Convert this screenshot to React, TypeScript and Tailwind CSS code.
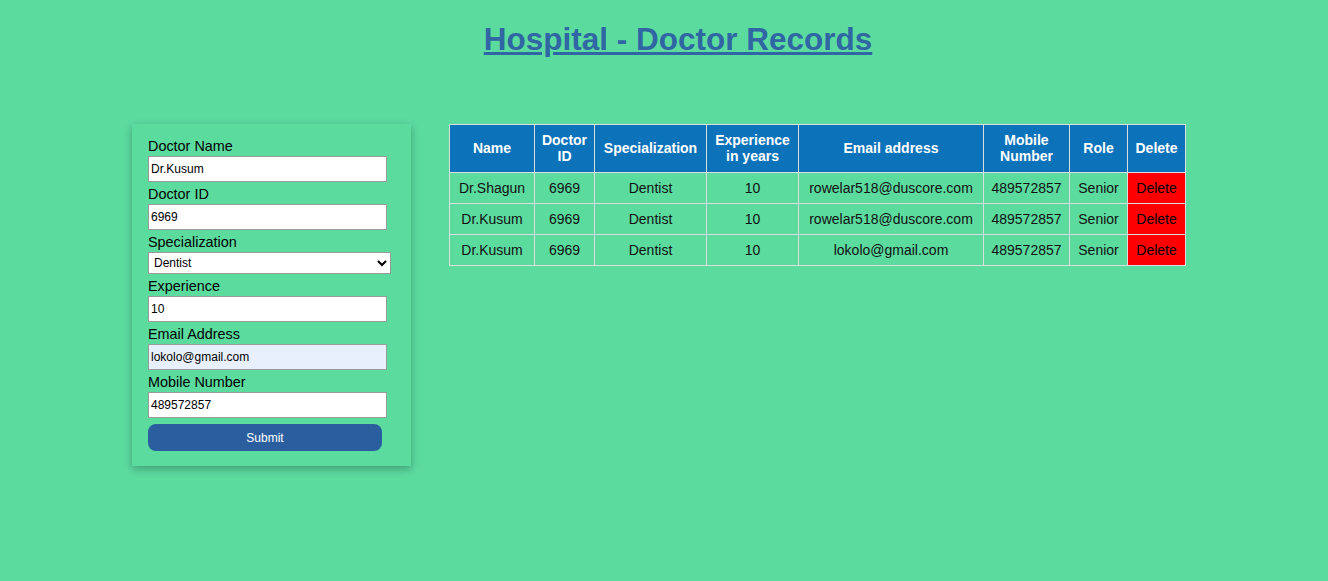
import React, { useState } from 'react';

type Doctor = {
  name: string;
  id: string;
  spec: string;
  exp: string;
  email: string;
  mobile: string;
  role: string;
};

const DOCTORS: Doctor[] = [
  { name: 'Dr.Shagun', id: '6969', spec: 'Dentist', exp: '10', email: 'rowelar518@duscore.com', mobile: '489572857', role: 'Senior' },
  { name: 'Dr.Kusum', id: '6969', spec: 'Dentist', exp: '10', email: 'rowelar518@duscore.com', mobile: '489572857', role: 'Senior' },
  { name: 'Dr.Kusum', id: '6969', spec: 'Dentist', exp: '10', email: 'lokolo@gmail.com', mobile: '489572857', role: 'Senior' },
];

const Label = ({ children }: { children: React.ReactNode }) => (
  <label className="block h-[22px] leading-[24px] text-[14.4px] text-black">{children}</label>
);

const inputCls =
  'block w-[239px] h-[26px] border border-[#9a9a9a] bg-white px-[2px] text-[12px] text-black outline-none';

export default function App() {
  const [form, setForm] = useState({
    name: 'Dr.Kusum',
    id: '6969',
    spec: 'Dentist',
    exp: '10',
    email: 'lokolo@gmail.com',
    mobile: '489572857',
  });

  const set = (k: keyof typeof form) => (e: React.ChangeEvent<HTMLInputElement | HTMLSelectElement>) =>
    setForm({ ...form, [k]: e.target.value });

  return (
    <div className="min-h-[581px] w-full bg-[#5cdb9f] font-['Liberation_Sans',Arial,sans-serif]">
      {/* Title */}
      <div className="pt-[21px] pl-[28px] text-center">
        <h1 className="text-[31.5px] leading-[36px] font-bold text-[#2f66a3] underline">Hospital - Doctor Records</h1>
      </div>

      <div className="flex items-start pt-[67px] pl-[132px] gap-[38px]">
        {/* Form card */}
        <form
          className="w-[279px] h-[342px] pt-[10px] pl-[16px] shadow-[0_3px_8px_rgba(0,0,0,0.28)]"
          onSubmit={(e) => e.preventDefault()}
        >
          <Label>Doctor Name</Label>
          <input className={inputCls} value={form.name} onChange={set('name')} />
          <Label>Doctor ID</Label>
          <input className={inputCls} value={form.id} onChange={set('id')} />
          <Label>Specialization</Label>
          <select
            className="block w-[243px] h-[22px] border border-[#9a9a9a] bg-white pl-[1px] text-[12px] text-black outline-none"
            value={form.spec}
            onChange={set('spec')}
          >
            <option>Dentist</option>
            <option>Cardiologist</option>
            <option>Surgeon</option>
          </select>
          <Label>Experience</Label>
          <input className={inputCls} value={form.exp} onChange={set('exp')} />
          <Label>Email Address</Label>
          <input className={inputCls + ' !bg-[#e8f0fe]'} value={form.email} onChange={set('email')} />
          <Label>Mobile Number</Label>
          <input className={inputCls} value={form.mobile} onChange={set('mobile')} />
          <button
            type="submit"
            className="mt-[6px] block w-[234px] h-[27px] rounded-[8px] bg-[#2a5e9f] text-[12px] text-white"
          >
            Submit
          </button>
        </form>

        {/* Records table */}
        <table className="w-[736px] table-fixed border-collapse text-[14px] leading-[16px] text-center">
          <colgroup>
            <col className="w-[85px]" />
            <col className="w-[60px]" />
            <col className="w-[112px]" />
            <col className="w-[92px]" />
            <col className="w-[185px]" />
            <col className="w-[86px]" />
            <col className="w-[58px]" />
            <col className="w-[58px]" />
          </colgroup>
          <thead>
            <tr className="bg-[#0c72ba] text-white font-bold">
              {['Name', 'Doctor ID', 'Specialization', 'Experience in years', 'Email address', 'Mobile Number', 'Role', 'Delete'].map((h) => (
                <th key={h} className="border border-[#dddddd] px-[6px] pt-[7px] pb-[8px] h-[48px] font-bold">
                  {h}
                </th>
              ))}
            </tr>
          </thead>
          <tbody className="text-[#111]">
            {DOCTORS.map((d, i) => (
              <tr key={i}>
                <td className="border border-[#dddddd] px-[4px] py-[7px]">{d.name}</td>
                <td className="border border-[#dddddd] px-[4px] py-[7px]">{d.id}</td>
                <td className="border border-[#dddddd] px-[4px] py-[7px]">{d.spec}</td>
                <td className="border border-[#dddddd] px-[4px] py-[7px]">{d.exp}</td>
                <td className="border border-[#dddddd] px-[4px] py-[7px] whitespace-nowrap">{d.email}</td>
                <td className="border border-[#dddddd] px-[4px] py-[7px]">{d.mobile}</td>
                <td className="border border-[#dddddd] px-[4px] py-[7px]">{d.role}</td>
                <td className="border border-[#dddddd] px-[4px] py-[7px] bg-[#ff0000] text-black">Delete</td>
              </tr>
            ))}
          </tbody>
        </table>
      </div>
    </div>
  );
}
